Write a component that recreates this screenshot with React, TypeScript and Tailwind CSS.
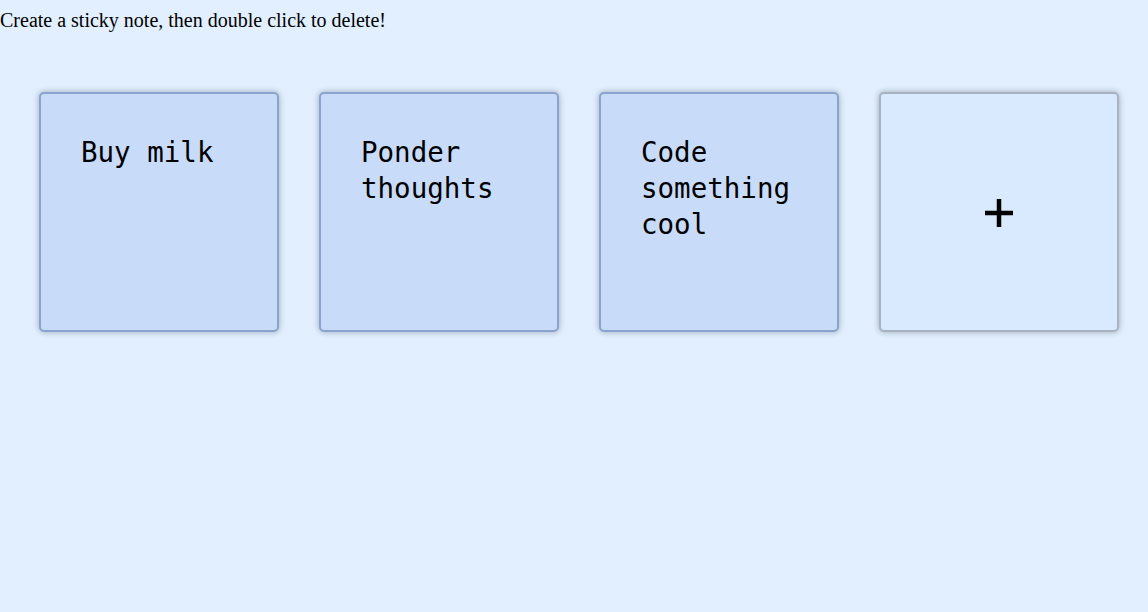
import React from "react";

const notes = ["Buy milk", "Ponder thoughts", "Code something cool"];

export default function App() {
  return (
    <div className="min-h-[612px] w-full bg-[#e1efff] [font-family:'Liberation_Serif',serif] text-black">
      <p className="pt-[9px] text-[20px] leading-[23px]">Create a sticky note, then double click to delete!</p>
      <div className="flex gap-[40px] pl-[39px] pt-[60px]">
        {notes.map((n) => (
          <div
            key={n}
            className="box-border flex h-[240px] w-[240px] rounded-[5px] border-2 border-[#8ba3cf] bg-[#c8dbf8] pl-[40px] pr-[36px] pt-[40px] shadow-[0_0_6px_rgba(0,0,0,0.3)]"
          >
            <div className="[font-family:'DejaVu_Sans_Mono',monospace] text-[27.5px] leading-[36px] break-words">
              {n}
            </div>
          </div>
        ))}
        <div className="box-border flex h-[240px] w-[240px] items-center justify-center rounded-[5px] border-2 border-[#a8b2c2] bg-[#d9eaff] shadow-[0_0_6px_rgba(0,0,0,0.3)]">
          <svg width="28" height="28" viewBox="0 0 28 28" className="mt-[1px]">
            <rect x="11.75" y="0" width="4.5" height="28" fill="#000" />
            <rect x="0" y="11.75" width="28" height="4.5" fill="#000" />
          </svg>
        </div>
      </div>
    </div>
  );
}
